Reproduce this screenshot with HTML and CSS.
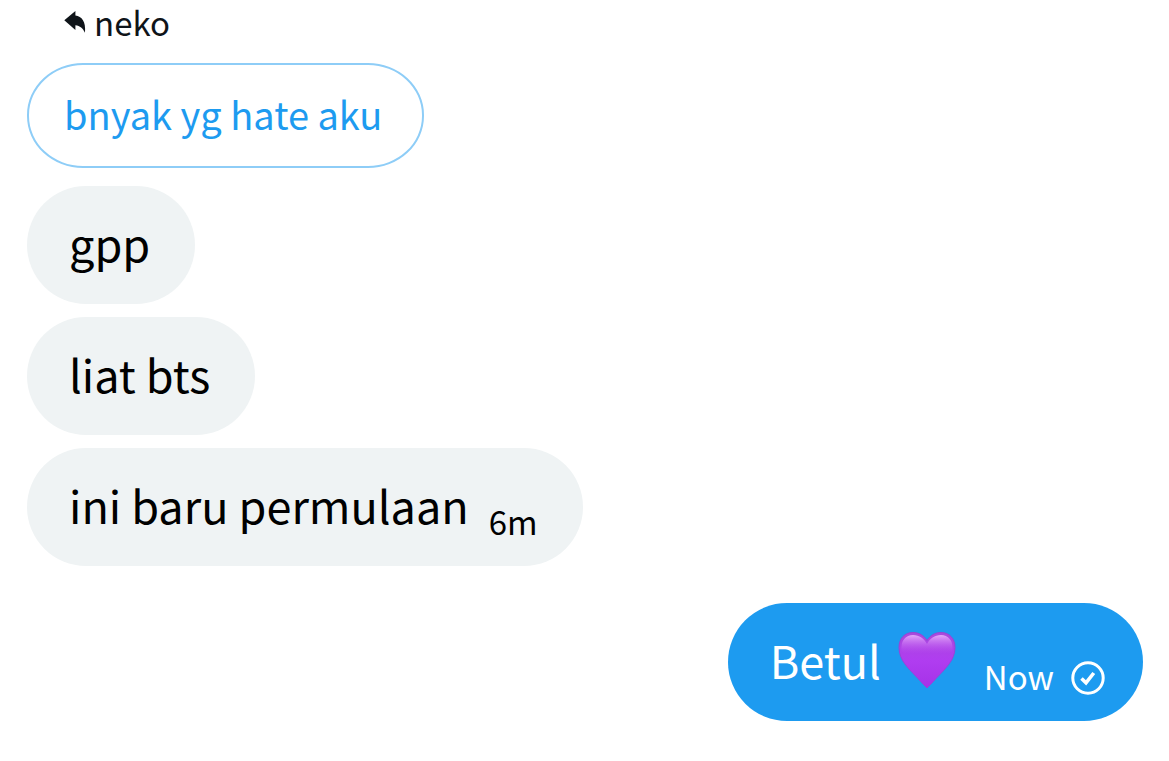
FILE: index.html
```html
<!DOCTYPE html>
<html lang="id">
<head>
    <meta charset="UTF-8">
    <meta name="viewport" content="width=device-width, initial-scale=1.0">
    <title>neko</title>
    <link rel="stylesheet" href="styles.css">
</head>
<body>
    <main class="chat">
        <div class="reply-to">
            <svg class="icon-reply" viewBox="0 0 22 22" aria-hidden="true">
                <path d="M0.300 9.300 L11.400 0 V4.600 C17.800 5.400 22 10.500 21 21.800 C19 17.200 16 14.800 11.400 14.300 V19 Z" fill="currentColor"/>
            </svg>
            <span>neko</span>
        </div>

        <div class="quote">bnyak yg hate aku</div>

        <div class="bubble">gpp</div>
        <div class="bubble">liat bts</div>
        <div class="bubble">
            <span>ini baru permulaan</span>
            <time class="time">6m</time>
        </div>

        <div class="bubble sent">
            <span>Betul</span>
            <svg class="icon-heart" viewBox="0 0 58 58" role="img" aria-label="♥">
                <defs>
                    <linearGradient id="heart-fill" x1="0" y1="0" x2="0" y2="1">
                        <stop offset="0" stop-color="#a94bdc"/>
                        <stop offset="0.5" stop-color="#b03df0"/>
                        <stop offset="1" stop-color="#a632e8"/>
                    </linearGradient>
                    <linearGradient id="heart-shine" x1="0" y1="0" x2="0" y2="1">
                        <stop offset="0" stop-color="#e3a8fa"/>
                        <stop offset="1" stop-color="#b747f0" stop-opacity="0"/>
                    </linearGradient>
                </defs>
                <path d="M29 57 C27 55 24 52 20 47.500 C10 37 1 29 1 16.500 C1 7 7 1.500 15 1.500 C21 1.500 26 4.500 29 9.500 C32 4.500 37 1.500 43 1.500 C51 1.500 57 7 57 16.500 C57 29 48 37 38 47.500 C34 52 31 55 29 57 Z" fill="url(#heart-fill)" stroke="#9a43d6" stroke-width="1"/>
                <path d="M3.500 20 C2.500 9 8 4 15 4 C21.500 4 26 7.500 29 13 C32 7.500 36.500 4 43 4 C50 4 55.500 9 54.500 20 C49 26 37 20 29 23 C21 20 9 26 3.500 20 Z" fill="url(#heart-shine)"/>
            </svg>
            <time class="time">Now</time>
            <svg class="icon-check" viewBox="0 0 34 34" role="img" aria-label="✓">
                <circle cx="17" cy="17" r="15.200" fill="none" stroke="currentColor" stroke-width="3"/>
                <path d="M10.500 17.500 L15 21.800 L22.800 12" fill="none" stroke="currentColor" stroke-width="3.600"/>
            </svg>
        </div>
    </main>
</body>
</html>
```
FILE: styles.css
```css
:root {
    --blue: #1d9bf0;
    --grey: #eff3f4;
    --outline: #8ecdf7;
}

* {
    margin: 0;
    padding: 0;
    box-sizing: border-box;
}

body {
    background-color: white;
    color: #0f1419;
    font-family: 'Noto Sans CJK JP', 'Noto Sans', sans-serif;
}

.chat {
    display: flex;
    flex-direction: column;
    align-items: flex-start;
    padding: 2px 26px 40px 27px;
}

.reply-to {
    display: flex;
    align-items: center;
    gap: 8px;
    margin-left: 37px;
    margin-bottom: 21px;
    font-size: 33px;
    line-height: 40px;
}

.icon-reply {
    width: 22px;
    height: 22px;
}

.quote {
    padding: 24px 40px 28px 35px;
    margin-bottom: 18px;
    border: 2px solid var(--outline);
    border-radius: 56px / 52px;
    color: var(--blue);
    font-size: 38px;
    line-height: 49px;
}

.bubble {
    display: flex;
    align-items: center;
    padding: 28px 45px 32px 42px;
    margin-bottom: 13px;
    border-radius: 59px;
    background-color: var(--grey);
    color: black;
    font-size: 45px;
    line-height: 58px;
}

.time {
    margin-left: 20px;
    margin-top: 32px;
    font-size: 33px;
    line-height: 26px;
}

.sent {
    align-self: flex-end;
    margin-top: 24px;
    margin-bottom: 0;
    padding-right: 38px;
    background-color: var(--blue);
    color: white;
}

.icon-heart {
    width: 58px;
    height: 58px;
    margin-left: 17px;
}

.sent .time {
    margin-left: 28px;
}

.icon-check {
    width: 34px;
    height: 34px;
    margin-left: 17px;
    margin-top: 30px;
    margin-bottom: -6px;
}
```
